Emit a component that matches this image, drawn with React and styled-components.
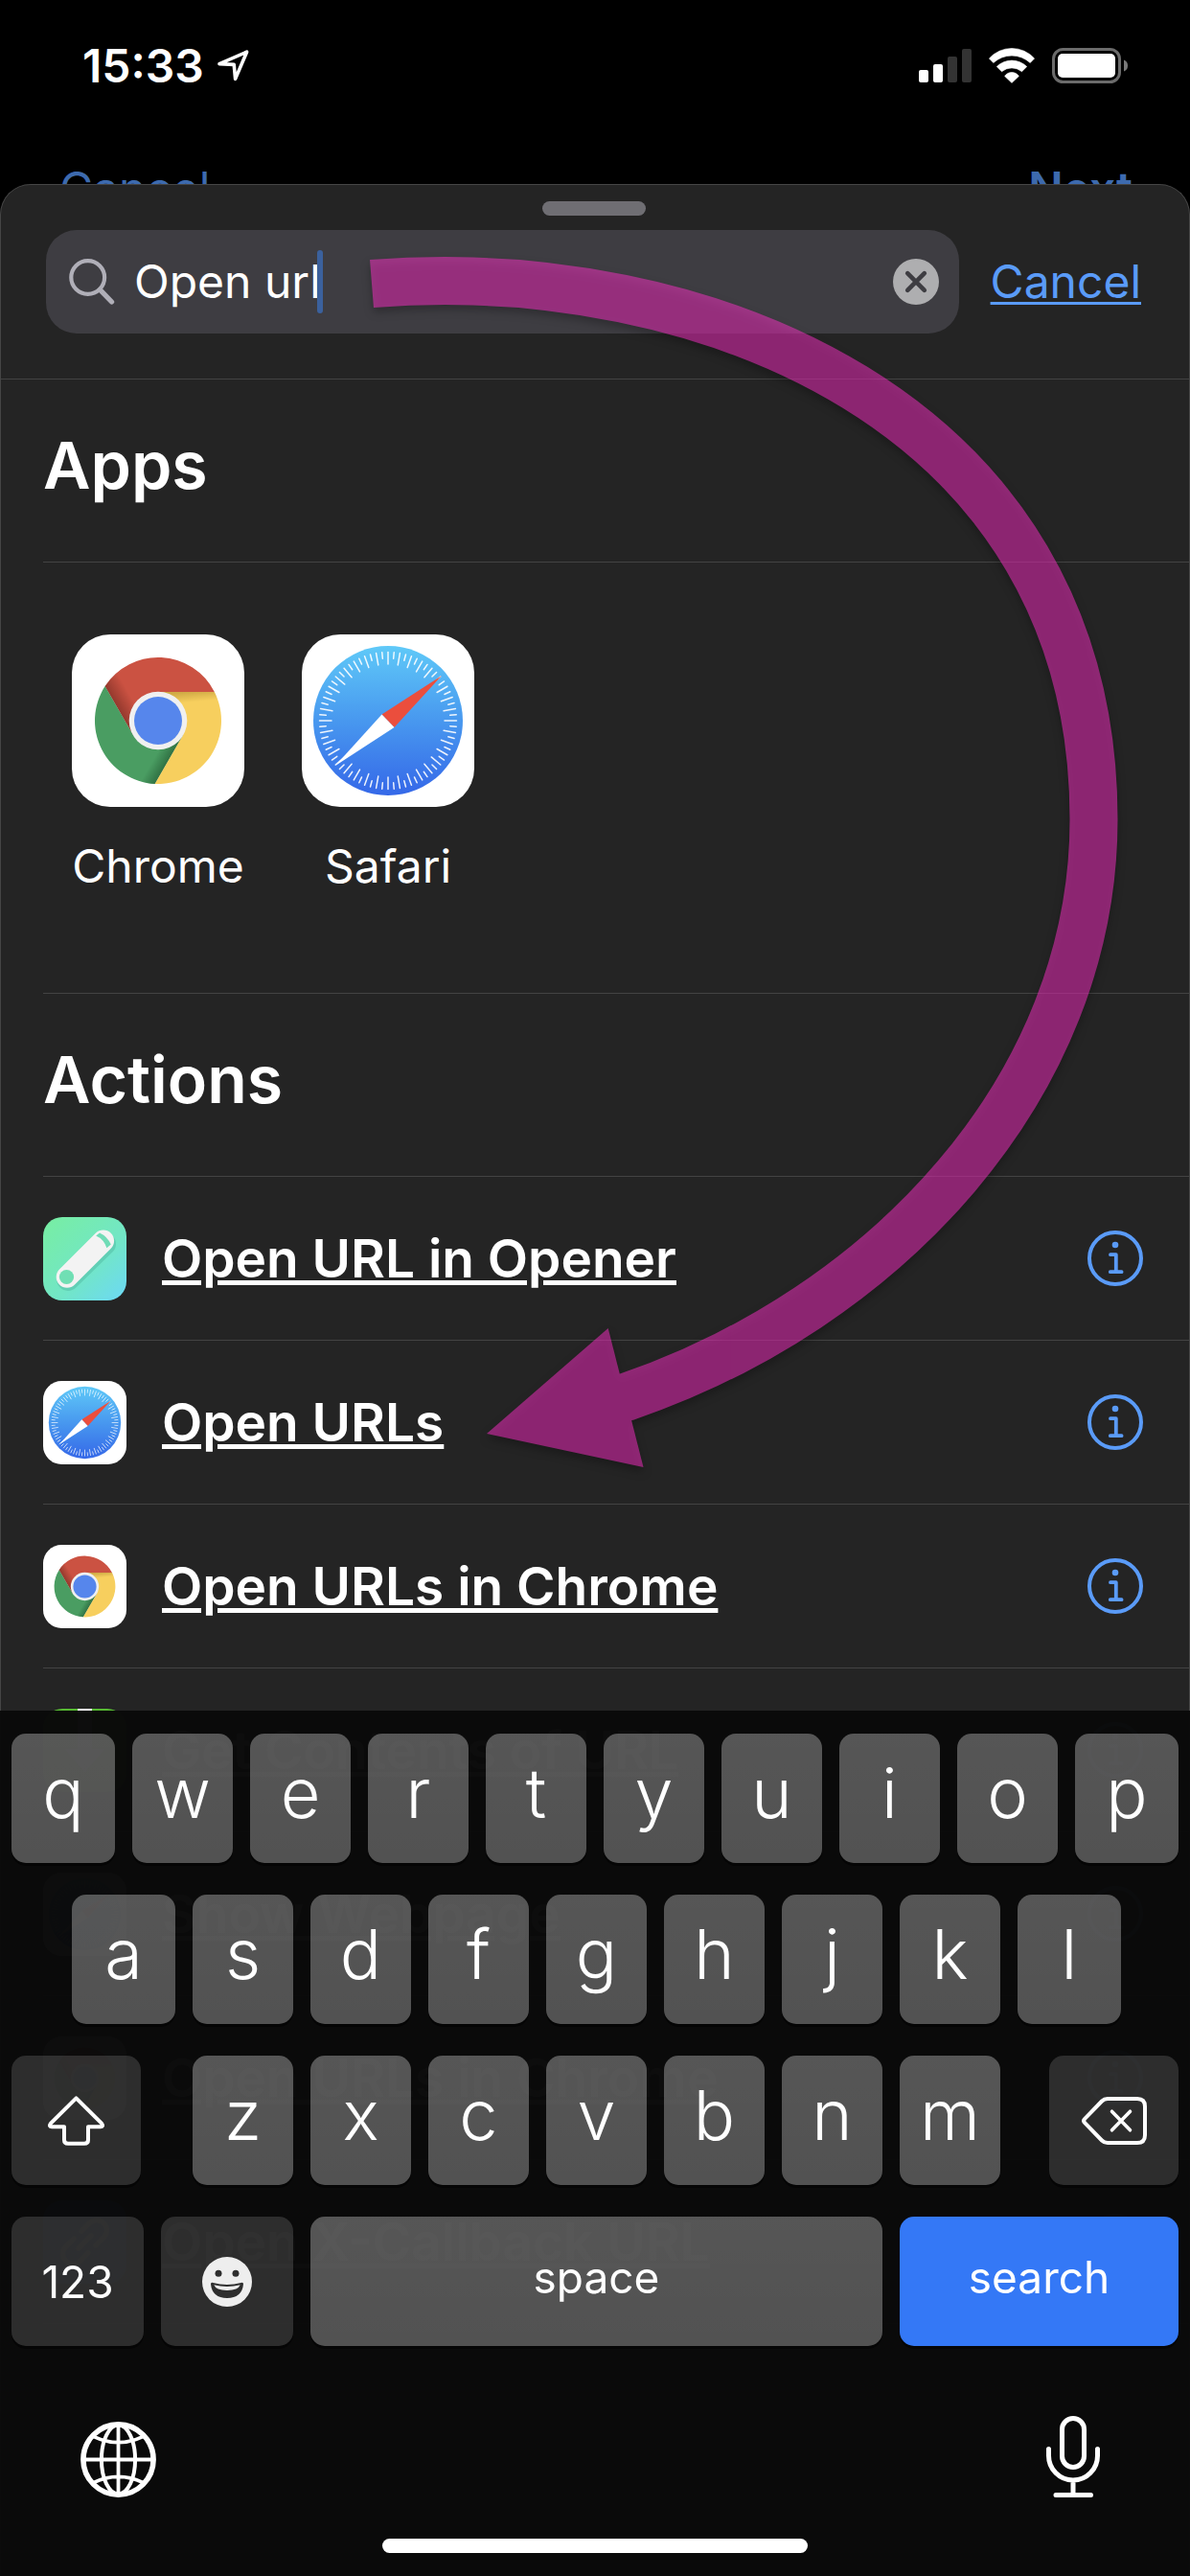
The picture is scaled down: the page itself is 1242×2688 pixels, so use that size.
import React, { useState } from "react";
import styled, { createGlobalStyle } from "styled-components";

const GlobalStyle = createGlobalStyle`
  * { box-sizing: border-box; }
  html, body { margin: 0; background: #000; }
  body, button, input {
    font-family: Inter, "Liberation Sans", Arial, sans-serif;
    color: #fff;
  }
  button, input { margin: 0; padding: 0; border: 0; background: none; }
  svg { display: block; flex: none; }
`;

const Screen = styled.div`
  position: relative;
  min-height: 100vh;
  display: flex;
  flex-direction: column;
  overflow: hidden;
  background: #000;
`;

/* Status bar */

const StatusBar = styled.header`
  display: flex;
  align-items: center;
  justify-content: space-between;
  height: 136px;
  padding: 0 65px 0 86px;
`;

const StatusGroup = styled.div`
  display: flex;
  align-items: center;
  gap: ${(p) => p.$gap}px;
`;

const Clock = styled.time`
  font-size: 48px;
  font-weight: 600;
`;

/* Navigation bar of the screen below the sheet */

const BackNav = styled.nav`
  display: flex;
  justify-content: space-between;
  align-items: flex-start;
  height: 56px;
  padding: 31px 60px 0 62px;
  overflow: hidden;
`;

const BackLink = styled.button`
  font-size: 48px;
  line-height: 60px;
  font-weight: ${(p) => (p.$strong ? 600 : 400)};
  color: #3d6aae;
`;

/* Sheet */

const Sheet = styled.main`
  flex: 1;
  display: flex;
  flex-direction: column;
  border: 1px solid #454545;
  border-bottom: 0;
  border-radius: 32px 32px 0 0;
  background: #242424;
`;

const SheetHeader = styled.div`
  display: flex;
  flex-direction: column;
  align-items: center;
  gap: 15px;
  padding: 17px 50px 47px 47px;
  border-bottom: 1px solid #434343;
`;

const Grabber = styled.div`
  width: 108px;
  height: 15px;
  border-radius: 8px;
  background: #6f6e73;
`;

const SearchRow = styled.form`
  align-self: stretch;
  display: flex;
  align-items: center;
  gap: 33px;
`;

const SearchField = styled.label`
  flex: 1;
  display: flex;
  align-items: center;
  gap: 20px;
  height: 108px;
  padding: 0 21px 0 24px;
  border-radius: 32px;
  background: #3e3d42;
`;

const InputWrap = styled.span`
  flex: 1;
  display: flex;
  align-items: center;
`;

const SearchInput = styled.input`
  field-sizing: content;
  font-size: 48px;
  line-height: 60px;
  outline: 0;
  caret-color: transparent;
`;

const Caret = styled.span`
  width: 6px;
  height: 66px;
  margin-left: -4px;
  border-radius: 3px;
  background: #3b619d;
`;

const CancelButton = styled.button`
  font-size: 48px;
  line-height: 60px;
  color: #5a9bf8;
  text-decoration: underline;
  text-decoration-thickness: 3px;
  text-underline-offset: 4px;
`;

const Section = styled.section`
  margin-left: 44px;
`;

const SectionTitle = styled.h2`
  display: flex;
  align-items: center;
  height: 191px;
  margin: 0;
  padding-bottom: 12px;
  border-bottom: 1px solid #434343;
  font-size: 68px;
  font-weight: 600;
`;

const AppGrid = styled.div`
  display: flex;
  gap: 60px;
  padding: 75px 30px 102px;
  border-bottom: 1px solid #434343;
`;

const AppTile = styled.a`
  display: flex;
  flex-direction: column;
  align-items: center;
  gap: 32px;
  width: 180px;
  font-size: 48px;
  line-height: 60px;
  color: #fff;
  text-decoration: none;
`;

const ActionList = styled.ul`
  margin: 0;
  padding: 0;
  list-style: none;
`;

const ActionRow = styled.li`
  display: flex;
  align-items: center;
  gap: 37px;
  height: 171px;
  padding-right: 48px;
  border-bottom: 1px solid #434343;
`;

const ActionLink = styled.a`
  flex: 1;
  font-size: 55px;
  font-weight: 600;
  color: #fff;
  text-decoration: underline;
  text-decoration-thickness: 5px;
  text-underline-offset: 3px;
`;

/* Curved pointer drawn over the sheet */

const Pointer = styled.svg`
  position: absolute;
  top: 240px;
  left: 360px;
  width: 840px;
  height: 1320px;
  pointer-events: none;
`;

const PointerShape = styled.g`
  filter: drop-shadow(0 5px 4px rgba(0, 0, 0, 0.5));
`;

/* Keyboard */

const Keyboard = styled.div`
  position: fixed;
  left: 0;
  right: 0;
  bottom: 0;
  display: flex;
  flex-direction: column;
  gap: 33px;
  padding: 24px 12px;
  background: rgba(10, 10, 10, 0.99);
`;

const KeyRow = styled.div`
  display: grid;
  grid-template-columns: ${(p) => p.$columns};
  gap: 18px;
  padding: ${(p) => p.$padding || "0"};
`;

const keyFill = {
  letter: "linear-gradient(rgba(255,255,255,0.31), rgba(255,255,255,0.295))",
  control: "rgba(255,255,255,0.147)",
  action: "#3478f6",
};

const Key = styled.button`
  display: flex;
  align-items: center;
  justify-content: center;
  height: 135px;
  border-radius: 15px;
  box-shadow: 0 3px 0 rgba(0, 0, 0, 0.5);
  background: ${(p) => keyFill[p.$kind || "letter"]};
  font-size: ${(p) => (p.$word ? 46 : 72)}px;
  font-weight: ${(p) => (p.$word ? 400 : 350)};
  padding-bottom: ${(p) => p.$lift || 0}px;
`;

const SystemRow = styled.div`
  display: flex;
  align-items: flex-end;
  justify-content: space-between;
  padding: 40px 82px 10px 72px;
`;

const IconButton = styled.button`
  display: block;
  line-height: 0;
`;

const HomeBar = styled.div`
  align-self: center;
  width: 444px;
  height: 15px;
  border-radius: 8px;
  background: #fff;
`;

/* Icons */

const LocationIcon = () => (
  <svg width="33" height="33" viewBox="0 0 33 33" fill="none" stroke="#fff" strokeWidth="3.6" strokeLinejoin="round">
    <path d="M2 14.6 30.6 2.2 18.6 30.4 17.2 15.4Z" />
  </svg>
);

const SignalIcon = () => (
  <svg width="55" height="37" viewBox="0 0 55 37" fill="#fff">
    <rect x="0" y="23" width="10" height="13" rx="2" />
    <rect x="15" y="17" width="10" height="19" rx="2" />
    <rect x="30" y="9" width="10" height="27" rx="2" fill="#333" />
    <rect x="45" y="1" width="10" height="35" rx="2" fill="#333" />
  </svg>
);

const WifiIcon = () => (
  <svg width="48" height="37" viewBox="0 0 48 37" fill="#fff" stroke="#fff" strokeWidth="0.6" strokeLinejoin="round">
    <path d="M.4 11A31.7 31.7 0 0 1 47.6 11L43.2 15.6A28.3 28.3 0 0 0 4.8 15.6Z" />
    <path d="M8.3 19.6A22.2 22.2 0 0 1 39.7 19.6L34.5 24.7A16.4 16.4 0 0 0 13.5 24.7Z" />
    <path d="M16.6 29.4A9 9 0 0 1 31.4 29.4L24 36.4Z" />
  </svg>
);

const BatteryIcon = () => (
  <svg width="79" height="37" viewBox="0 0 79 37">
    <rect x="1.5" y="1.5" width="69" height="34" rx="10" fill="none" stroke="#6b6b6b" strokeWidth="3" />
    <rect x="6" y="6" width="60" height="25" rx="5" fill="#fff" />
    <path d="M75 12.5q4 1.6 4 6t-4 6Z" fill="#7a7a7a" />
  </svg>
);

const SearchIcon = () => (
  <svg width="48" height="50" viewBox="0 0 48 50" fill="none" stroke="#b0afb8" strokeLinecap="round">
    <circle cx="19.7" cy="20.5" r="17.4" strokeWidth="4.2" />
    <path d="M32.4 33.4 44.6 46" strokeWidth="5.2" />
  </svg>
);

const ClearIcon = () => (
  <svg width="48" height="48" viewBox="0 0 48 48">
    <circle cx="24" cy="24" r="24" fill="#aeaeb0" />
    <path d="M15.2 15.2 32.8 32.8M32.8 15.2 15.2 32.8" stroke="#3e3d42" strokeWidth="4.6" strokeLinecap="round" />
  </svg>
);

const RED = "M90 60 148.8 60A66 66 0 0 0 34.6 54.1L64 105 90 90Z";
const GREEN = "M64 105 34.6 54.1A66 66 0 0 0 86.6 155.9L116 105 90 90Z";
const YELLOW = "M116 105 86.6 155.9A66 66 0 0 0 148.8 60L90 60 90 90Z";

const ChromeIcon = ({ size }) => (
  <svg width={size} height={size} viewBox="0 0 180 180">
    <defs>
      <linearGradient id={`cr${size}`} gradientUnits="userSpaceOnUse" x1="49" y1="80" x2="65" y2="70.800">
        <stop offset="0" stopColor="#5a1f18" stopOpacity="0.5" />
        <stop offset="1" stopColor="#5a1f18" stopOpacity="0" />
      </linearGradient>
      <linearGradient id={`cy${size}`} gradientUnits="userSpaceOnUse" x1="120" y1="60" x2="121" y2="71">
        <stop offset="0" stopColor="#7a5a10" stopOpacity="0.32" />
        <stop offset="1" stopColor="#7a5a10" stopOpacity="0" />
      </linearGradient>
      <linearGradient id={`cg${size}`} gradientUnits="userSpaceOnUse" x1="101" y1="131" x2="89" y2="124">
        <stop offset="0" stopColor="#123f20" stopOpacity="0.45" />
        <stop offset="1" stopColor="#123f20" stopOpacity="0" />
      </linearGradient>
    </defs>
    <rect width="180" height="180" rx="40" fill="#fff" />
    <path d={RED} fill="#cb5242" />
    <path d={GREEN} fill="#4a9d62" />
    <path d={YELLOW} fill="#f7cf5e" />
    <path d={RED} fill={`url(#cr${size})`} />
    <path d={GREEN} fill={`url(#cg${size})`} />
    <path d={YELLOW} fill={`url(#cy${size})`} />
    <circle cx="90" cy="90" r="30.3" fill="#f0f0f0" />
    <circle cx="90" cy="90" r="25" fill="#5686ec" />
  </svg>
);

const TICKS = Array.from({ length: 72 }, (_, i) => i);

const SafariIcon = ({ size }) => (
  <svg width={size} height={size} viewBox="0 0 180 180">
    <defs>
      <linearGradient id={`sf${size}`} x1="0" y1="0" x2="0" y2="1">
        <stop offset="0" stopColor="#5fc9f8" />
        <stop offset="0.5" stopColor="#4898ef" />
        <stop offset="1" stopColor="#3568e8" />
      </linearGradient>
    </defs>
    <rect width="180" height="180" rx="40" fill="#fff" />
    <circle cx="90" cy="90" r="78" fill={`url(#sf${size})`} />
    <g stroke="#fff" strokeWidth="1.5" strokeLinecap="round" opacity="0.9">
      {TICKS.map((i) => (
        <line key={i} x1="90" x2="90" y1="18.5" y2={i % 2 ? 25 : 31} transform={`rotate(${i * 5} 90 90)`} />
      ))}
    </g>
    <path d="M146 43 83.5 83.5 96.5 97Z" fill="#eb4e3d" />
    <path d="M35 137 83.5 83.5 96.5 97Z" fill="#fff" />
  </svg>
);

const OpenerIcon = ({ size }) => (
  <svg width={size} height={size} viewBox="0 0 87 87">
    <defs>
      <linearGradient id="op" x1="0.1" y1="0.05" x2="1" y2="1">
        <stop offset="0" stopColor="#77eda6" />
        <stop offset="0.55" stopColor="#72e6c6" />
        <stop offset="1" stopColor="#6cd8f6" />
      </linearGradient>
    </defs>
    <rect width="87" height="87" rx="20" fill="url(#op)" />
    <path d="M26 65 64 28" stroke="#3a9c8c" strokeOpacity="0.3" strokeWidth="24" strokeLinecap="round" />
    <path d="M25 62.5 62.8 24.7" stroke="#f3f3f3" strokeWidth="22.6" strokeLinecap="round" />
    <circle cx="24.5" cy="62.5" r="7.6" fill="#70dfb4" />
    <path d="M55.2 19.4 59 16.4Q67 20 70.8 28.6L66.4 32.2Q63.5 23 55.2 19.4Z" fill="#70dcb6" />
  </svg>
);

const ContentsIcon = ({ size }) => (
  <svg width={size} height={size} viewBox="0 0 87 87">
    <rect width="87" height="87" rx="20" fill="#57b933" />
    <path d="M36 0H51V42H64L43.500 66 23 42H36Z" fill="#fff" />
  </svg>
);

const LinkIcon = ({ size }) => (
  <svg width={size} height={size} viewBox="0 0 87 87">
    <rect width="87" height="87" rx="20" fill="#2f7fe0" />
    <g transform="rotate(-45 43.5 43.5)" fill="none" stroke="#fff" strokeWidth="5" strokeLinecap="round">
      <path d="M38 33H26a10.500 10.500 0 0 0 0 21H38M49 33H61a10.500 10.500 0 0 1 0 21H49M34 43.500H53" />
    </g>
  </svg>
);

const InfoIcon = () => (
  <svg width="58" height="58" viewBox="0 0 58 58" fill="none" stroke="#5a9bf8" strokeLinecap="round" strokeLinejoin="round">
    <circle cx="29" cy="29" r="27" strokeWidth="4" />
    <circle cx="29" cy="15" r="3.3" fill="#5a9bf8" stroke="none" />
    <path d="M24 25.200H29.800V43.200M23.800 43.200H35.600" strokeWidth="3.8" />
  </svg>
);

const ShiftIcon = () => (
  <svg width="59" height="52" viewBox="0 0 59 52" fill="none" stroke="#fff" strokeWidth="4" strokeLinejoin="round">
    <path d="M29.500 2.400 56 28.600Q58.600 32 55 32.200H42V46Q42 49.800 38 49.800H21Q17 49.800 17 46V32.200H4Q.4 32 3 28.600Z" />
  </svg>
);

const BackspaceIcon = () => (
  <svg width="68" height="50" viewBox="0 0 68 50" fill="none" stroke="#fff" strokeWidth="4" strokeLinecap="round" strokeLinejoin="round">
    <path d="M27 2H58Q66 2 66 10V40Q66 48 58 48H27Q23.500 48 21 45.500L3.200 27.200Q1 25 3.200 22.800L21 4.500Q23.500 2 27 2Z" />
    <path d="M31.500 15.200 50.500 34.800M50.500 15.200 31.500 34.800" strokeWidth="3.6" />
  </svg>
);

const EmojiIcon = () => (
  <svg width="52" height="52" viewBox="0 0 52 52">
    <circle cx="26" cy="26" r="26" fill="#eee" />
    <circle cx="17" cy="17.300" r="3.500" fill="#2e2e2e" />
    <circle cx="35" cy="17.300" r="3.500" fill="#2e2e2e" />
    <path d="M9 28.500Q9 26.200 11.200 27Q26 31.200 40.800 27Q43 26.200 43 28.500Q41.500 43 26 43T9 28.500Z" fill="#2e2e2e" />
    <path d="M12.300 29.300Q26 32.500 39.700 29.300Q37.500 35 26 35T12.300 29.300Z" fill="#eee" />
  </svg>
);

const GlobeIcon = () => (
  <svg width="79" height="79" viewBox="0 0 79 79" fill="none" stroke="#fff">
    <circle cx="39.500" cy="39.500" r="36.600" strokeWidth="5.600" />
    <ellipse cx="39.500" cy="39.500" rx="17.600" ry="36" strokeWidth="4" />
    <path d="M39.500 3V76M3 39.500H76M14 15.600Q39.500 27.600 65 15.600M14 63.400Q39.500 51.400 65 63.400" strokeWidth="3.800" />
  </svg>
);

const MicIcon = () => (
  <svg width="56" height="85" viewBox="0 0 56 85" fill="none" stroke="#fff" strokeWidth="5" strokeLinecap="round">
    <rect x="16.500" y="2.500" width="23" height="51" rx="11.500" />
    <path d="M2.500 34.500V41.500A25.500 25.500 0 0 0 53.500 41.500V34.500M28 67V82M10 82.500H46.500" />
  </svg>
);

/* Data */

const ACTIONS = [
  { name: "Open URL in Opener", Icon: OpenerIcon },
  { name: "Open URLs", Icon: SafariIcon },
  { name: "Open URLs in Chrome", Icon: ChromeIcon },
  { name: "Get Contents of URL", Icon: ContentsIcon },
  { name: "Show Webpage", Icon: SafariIcon },
  { name: "Open URLs in Chrome", Icon: ChromeIcon },
  { name: "Open X-Callback URL", Icon: LinkIcon },
];

const Letters = ({ keys }) =>
  [...keys].map((k) => (
    <Key key={k} type="button" $lift={13}>
      {k}
    </Key>
  ));

export default function App() {
  const [query, setQuery] = useState("Open url");

  return (
    <Screen>
      <GlobalStyle />
      <StatusBar>
        <StatusGroup $gap={14}>
          <Clock>15:33</Clock>
          <LocationIcon />
        </StatusGroup>
        <StatusGroup $gap={18}>
          <SignalIcon />
          <WifiIcon />
          <BatteryIcon />
        </StatusGroup>
      </StatusBar>
      <BackNav>
        <BackLink type="button">Cancel</BackLink>
        <BackLink type="button" $strong>Next</BackLink>
      </BackNav>

      <Sheet>
        <SheetHeader>
          <Grabber />
          <SearchRow onSubmit={(e) => e.preventDefault()}>
            <SearchField>
              <SearchIcon />
              <InputWrap>
                <SearchInput
                  type="text"
                  aria-label="Search"
                  value={query}
                  onChange={(e) => setQuery(e.target.value)}
                />
                <Caret />
              </InputWrap>
              <IconButton type="button" aria-label="Clear text" onClick={() => setQuery("")}>
                <ClearIcon />
              </IconButton>
            </SearchField>
            <CancelButton type="button">Cancel</CancelButton>
          </SearchRow>
        </SheetHeader>

        <Section>
          <SectionTitle>Apps</SectionTitle>
          <AppGrid>
            <AppTile href="#chrome">
              <ChromeIcon size={180} />
              Chrome
            </AppTile>
            <AppTile href="#safari">
              <SafariIcon size={180} />
              Safari
            </AppTile>
          </AppGrid>
        </Section>

        <Section>
          <SectionTitle>Actions</SectionTitle>
          <ActionList>
            {ACTIONS.map(({ name, Icon }, i) => (
              <ActionRow key={i}>
                <Icon size={87} />
                <ActionLink href="#action">{name}</ActionLink>
                <IconButton type="button" aria-label={`About ${name}`}>
                  <InfoIcon />
                </IconButton>
              </ActionRow>
            ))}
          </ActionList>
        </Section>
      </Sheet>

      <Pointer viewBox="360 240 840 1320" aria-hidden="true">
        <PointerShape>
          <g opacity="0.5">
            <path
              d="M388 296C728 269 1141.500 425 1141.500 855C1141.500 1135 923 1366 653 1458L632 1464.500"
              fill="none"
              stroke="#fd2fc7"
              strokeWidth="50"
            />
            <path d="M634.700 1386 671.500 1531 508 1496Z" fill="#fd2fc7" />
          </g>
        </PointerShape>
      </Pointer>

      <Keyboard>
        <KeyRow $columns="108fr repeat(8, 105fr) 108fr">
          <Letters keys="qwertyuiop" />
        </KeyRow>
        <KeyRow $columns="108fr repeat(7, 105fr) 108fr" $padding="0 60px 0 63px">
          <Letters keys="asdfghjkl" />
        </KeyRow>
        <KeyRow $columns="135fr 18fr repeat(7, 105fr) 15fr 135fr">
          <Key type="button" $kind="control" aria-label="Shift">
            <ShiftIcon />
          </Key>
          <span />
          <Letters keys="zxcvbnm" />
          <span />
          <Key type="button" $kind="control" aria-label="Delete">
            <BackspaceIcon />
          </Key>
        </KeyRow>
        <KeyRow $columns="138fr 138fr 597fr 291fr">
          <Key type="button" $kind="control" $word>123</Key>
          <Key type="button" $kind="control" aria-label="Emoji">
            <EmojiIcon />
          </Key>
          <Key type="button" $word $lift={9}>space</Key>
          <Key type="button" $kind="action" $word $lift={9}>search</Key>
        </KeyRow>
        <SystemRow>
          <IconButton type="button" aria-label="Next keyboard">
            <GlobeIcon />
          </IconButton>
          <IconButton type="button" aria-label="Dictate">
            <MicIcon />
          </IconButton>
        </SystemRow>
        <HomeBar />
      </Keyboard>
    </Screen>
  );
}
